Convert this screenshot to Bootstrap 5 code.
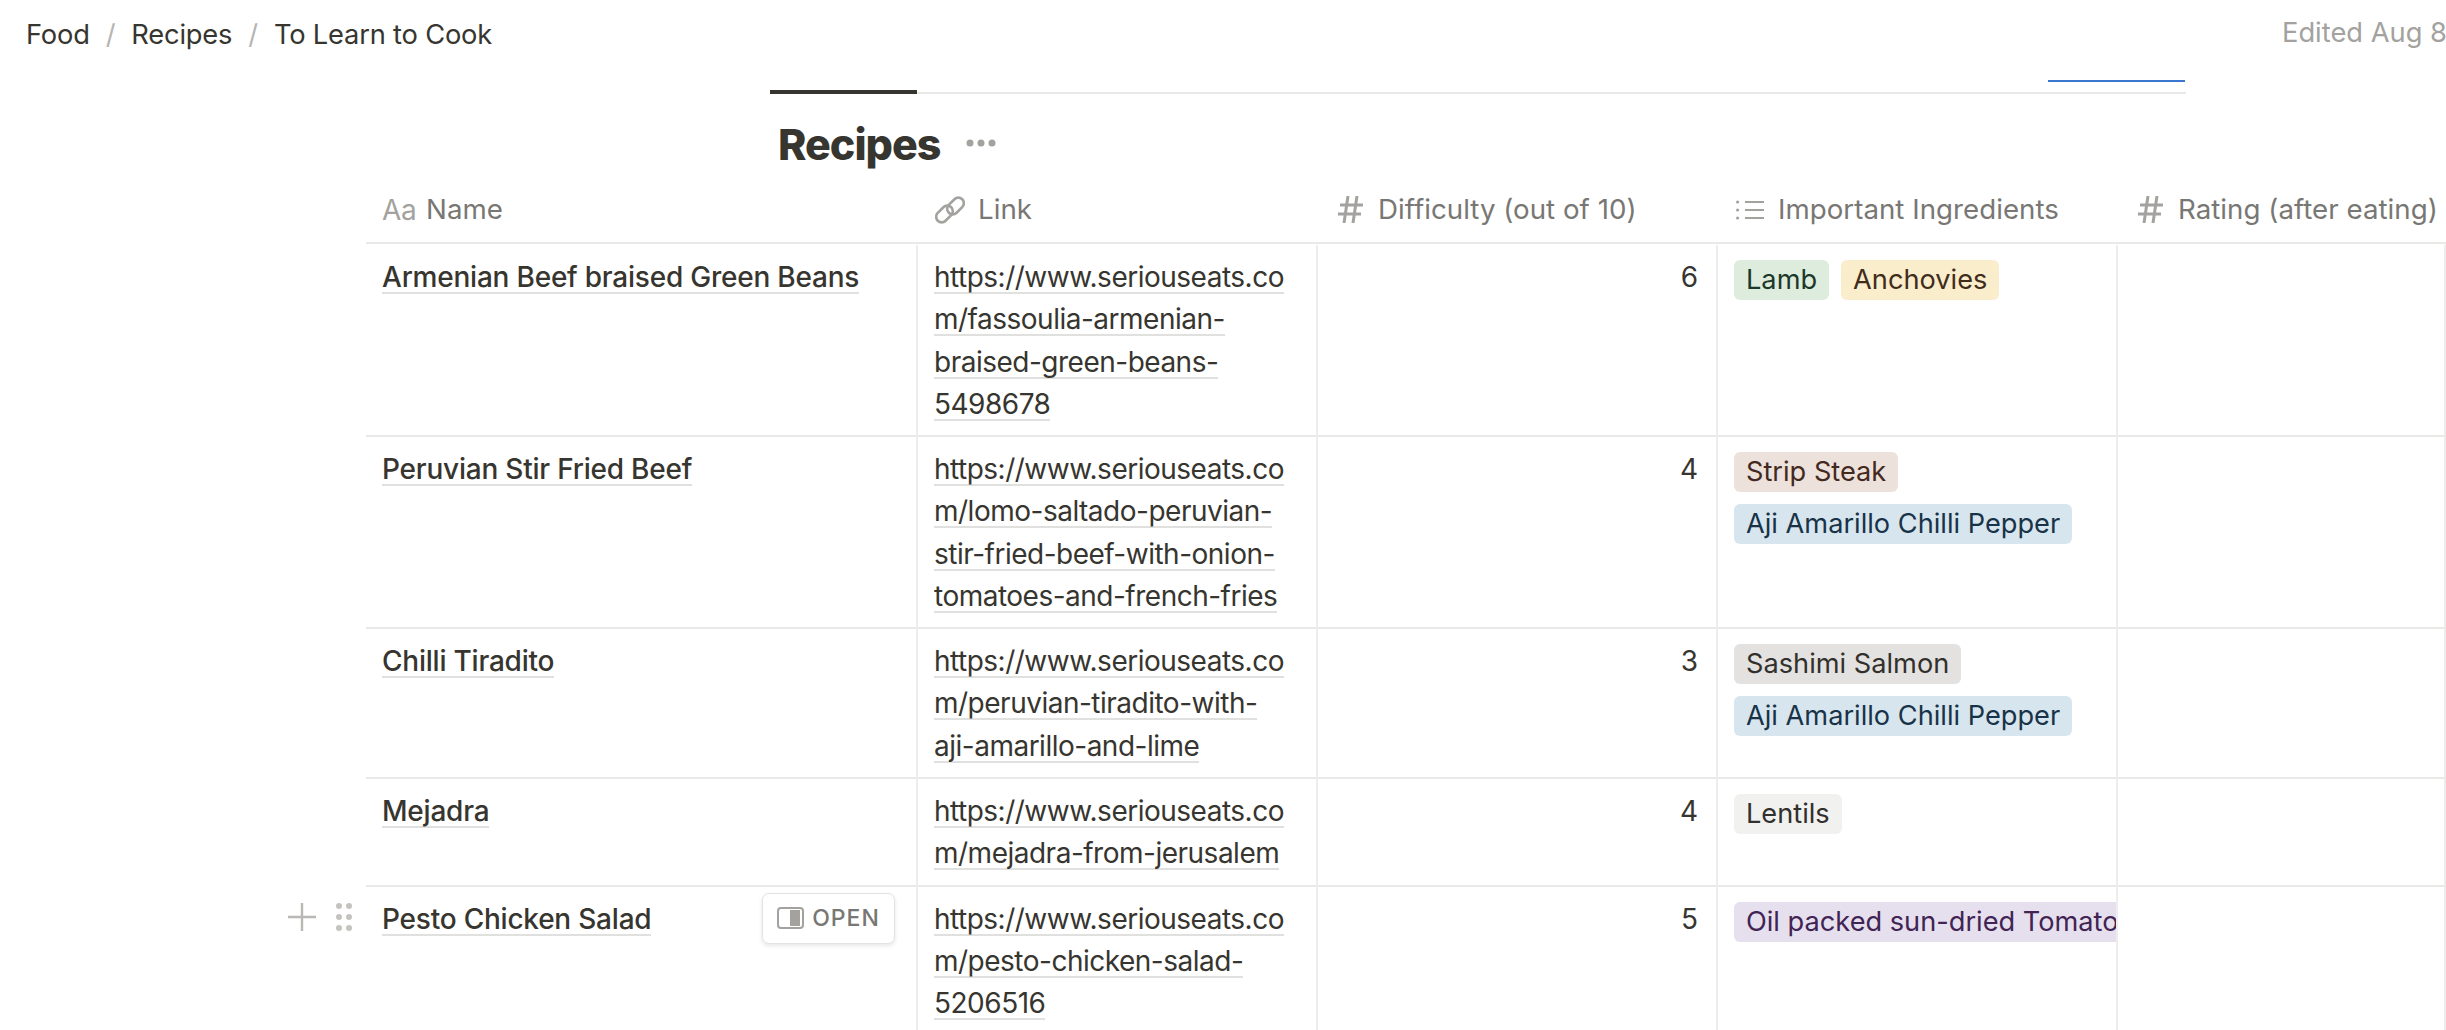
<!DOCTYPE html>
<html lang="en">
<head>
<meta charset="utf-8">
<title>To Learn to Cook</title>
<link href="https://cdn.jsdelivr.net/npm/bootstrap@5.3.0/dist/css/bootstrap.min.css" rel="stylesheet">
<style>
html,body{height:100%;overflow:hidden;background:#fff}
body{font-family:Inter,"Liberation Sans",sans-serif;color:#37352f;font-size:28px;width:2446px}
.topbar{height:70px;padding-left:26px;white-space:nowrap}
.crumb{font-size:27.3px;letter-spacing:-.2px}
.crumb-sep{color:#b5b4b1;margin:0 16px}
.edited{font-size:27.3px;color:#a3a29e;width:164px;overflow:hidden;flex:none;margin-top:-3px}
.tabrow{margin-left:770px;width:1416px;height:24px;border-bottom:2px solid #e9e9e8;position:relative}
.tab-active{position:absolute;left:0;bottom:-2px;width:147px;height:4px;background:#37352f}
.tab-blue{position:absolute;right:1px;bottom:10px;width:137px;height:2px;background:#3a78cf}
.title-row{margin-left:778px;height:91px;padding-top:15px}
.title-text{font-size:43px;font-weight:800;letter-spacing:-1px;margin:0;line-height:70px;color:#37352f}
.title-dots{margin:30px 0 0 25px;flex:none}
.nt-wrap{margin-left:366px;width:2080px;position:relative}
.nt-table{table-layout:fixed;border-collapse:separate;border-spacing:0;width:2080px;margin:0}
.nt-table th,.nt-table td{padding:0;font-weight:400;vertical-align:top;overflow:hidden}
.nt-table th{height:59px;padding:1px 0 9px;color:#787774;font-size:27.7px;letter-spacing:.02px;border-bottom:2px solid #e9e9e8;white-space:nowrap}
.nt-table td{border-bottom:2px solid #e9e9e8;border-right:2px solid #ededec;padding:11px 16px 10px;line-height:42.3px}
.nt-table tr:first-child td{border-top:2px solid #fff;padding-top:10px;padding-bottom:9.8px}
.c1{width:552px}.c2{width:400px}.c3{width:400px}.c4{width:400px}.c5{width:328px}
.hcell{height:47px;padding-left:14px}
.hicon{width:36px;margin-right:10px;flex:none}
.aa{color:#a3a29e;font-size:28px;letter-spacing:-.2px;padding-left:2px}
.ul{background:linear-gradient(#e0e0de,#e0e0de) 0 100%/100% 2px no-repeat}
.nm{font-weight:500;letter-spacing:-.22px}
.lk{letter-spacing:-.5px}
.num{text-align:right;padding-right:18px!important}
.nt-table td.tagcell{padding:15px 0 9px 16px}
.nt-table tr:first-child td.tagcell{padding-top:14px}
.nt-tag{height:40px;line-height:40px;border-radius:6px;padding:0 12px;font-size:27.2px;white-space:nowrap;display:inline-block}
.tagrow{gap:12px;overflow:hidden;width:382px}
.tg{background:#ddecdc;color:#1c3829}.ty{background:#faedcc;color:#402c1b}.tb{background:#ece1db;color:#44291f}
.tbl{background:#d7e5ee;color:#183347}.tgr{background:#e3e2e0;color:#32302c}.tl{background:#f1f1ef;color:#32302c}.tp{background:#e6dfee;color:#412454}
.rowctl{position:absolute;left:-78px;top:16px;gap:20px}
.openbtn{position:absolute;left:396px;top:6px;width:133px;height:51px;background:#fff;border:1px solid #e3e3e1;border-radius:7px;box-shadow:0 2px 4px rgba(15,15,15,.1);color:#787774;font-size:23px;font-weight:500;letter-spacing:1px}
.nt-table td.pos-cell{position:relative;overflow:visible}
</style>
</head>
<body>
<div class="topbar d-flex justify-content-between align-items-center">
  <div class="crumb"><span>Food</span><span class="crumb-sep">/</span><span>Recipes</span><span class="crumb-sep">/</span><span>To Learn to Cook</span></div>
  <div class="edited">Edited Aug 8</div>
</div>
<div class="tabrow"><div class="tab-active"></div><div class="tab-blue"></div></div>
<div class="title-row d-flex align-items-start">
  <h1 class="title-text">Recipes</h1>
  <svg class="title-dots" width="30" height="8" viewBox="0 0 30 8" fill="#a3a29e"><circle cx="4" cy="4" r="3.5"/><circle cx="15" cy="4" r="3.5"/><circle cx="26" cy="4" r="3.5"/></svg>
</div>
<div class="nt-wrap">
<table class="nt-table">
<colgroup><col class="c1"><col class="c2"><col class="c3"><col class="c4"><col class="c5"></colgroup>
<thead><tr>
<th><div class="hcell d-flex align-items-center"><span class="hicon aa">Aa</span>Name</div></th>
<th><div class="hcell d-flex align-items-center"><span class="hicon d-flex justify-content-center"><svg width="30" height="30" viewBox="0 0 30 30" fill="none" stroke="#a3a29e" stroke-width="2.6"><rect x="11" y="5.5" width="19" height="11" rx="5.5" transform="rotate(-45 20.5 11)"/><rect x="0" y="13.5" width="19" height="11" rx="5.5" transform="rotate(-45 9.5 19)"/></svg></span>Link</div></th>
<th><div class="hcell d-flex align-items-center"><span class="hicon d-flex justify-content-center"><svg width="25" height="27" viewBox="0 0 25 27" fill="none" stroke="#a3a29e" stroke-width="3"><path d="M10 0L6 27M19 0l-4 27M2 9h23M0 18h23"/></svg></span>Difficulty (out of 10)</div></th>
<th><div class="hcell d-flex align-items-center"><span class="hicon d-flex justify-content-center"><svg width="28" height="20" viewBox="0 0 28 20" fill="#a3a29e"><circle cx="1.6" cy="2" r="1.6"/><circle cx="1.6" cy="10" r="1.6"/><circle cx="1.6" cy="18" r="1.6"/><rect x="9" y="1" width="19" height="2"/><rect x="9" y="9" width="19" height="2"/><rect x="9" y="17" width="19" height="2"/></svg></span>Important Ingredients</div></th>
<th><div class="hcell d-flex align-items-center"><span class="hicon d-flex justify-content-center"><svg width="25" height="27" viewBox="0 0 25 27" fill="none" stroke="#a3a29e" stroke-width="3"><path d="M10 0L6 27M19 0l-4 27M2 9h23M0 18h23"/></svg></span>Rating (after eating)</div></th>
</tr></thead>
<tbody>
<tr><td><span class="ul nm">Armenian Beef braised Green Beans</span></td>
<td class="lk"><span class="ul">https://www.seriouseats.co</span><br><span class="ul">m/fassoulia-armenian-</span><br><span class="ul">braised-green-beans-</span><br><span class="ul">5498678</span></td>
<td class="num">6</td>
<td class="tagcell"><div class="d-flex flex-wrap tagrow"><span class="nt-tag tg">Lamb</span><span class="nt-tag ty">Anchovies</span></div></td><td></td></tr>
<tr><td><span class="ul nm">Peruvian Stir Fried Beef</span></td>
<td class="lk"><span class="ul">https://www.seriouseats.co</span><br><span class="ul">m/lomo-saltado-peruvian-</span><br><span class="ul">stir-fried-beef-with-onion-</span><br><span class="ul">tomatoes-and-french-fries</span></td>
<td class="num">4</td>
<td class="tagcell"><div class="d-flex flex-wrap tagrow"><span class="nt-tag tb">Strip Steak</span><span class="nt-tag tbl">Aji Amarillo Chilli Pepper</span></div></td><td></td></tr>
<tr><td><span class="ul nm">Chilli Tiradito</span></td>
<td class="lk"><span class="ul">https://www.seriouseats.co</span><br><span class="ul">m/peruvian-tiradito-with-</span><br><span class="ul">aji-amarillo-and-lime</span></td>
<td class="num">3</td>
<td class="tagcell"><div class="d-flex flex-wrap tagrow"><span class="nt-tag tgr">Sashimi Salmon</span><span class="nt-tag tbl">Aji Amarillo Chilli Pepper</span></div></td><td></td></tr>
<tr><td><span class="ul nm">Mejadra</span></td>
<td class="lk"><span class="ul">https://www.seriouseats.co</span><br><span class="ul">m/mejadra-from-jerusalem</span></td>
<td class="num">4</td>
<td class="tagcell"><div class="d-flex flex-wrap tagrow"><span class="nt-tag tl">Lentils</span></div></td><td></td></tr>
<tr><td class="pos-cell"><span class="ul nm">Pesto Chicken Salad</span>
<div class="rowctl d-flex align-items-center"><svg width="28" height="28" viewBox="0 0 28 28" stroke="#b9b8b5" stroke-width="2.4" fill="none"><path d="M14 0v28M0 14h28"/></svg><svg width="16" height="28" viewBox="0 0 16 28" fill="#c4c3c0"><circle cx="3" cy="3" r="3"/><circle cx="13" cy="3" r="3"/><circle cx="3" cy="14" r="3"/><circle cx="13" cy="14" r="3"/><circle cx="3" cy="25" r="3"/><circle cx="13" cy="25" r="3"/></svg></div>
<div class="openbtn d-flex align-items-center justify-content-center"><svg class="me-2" width="27" height="22" viewBox="0 0 27 22"><rect x="1" y="1" width="25" height="20" rx="3" fill="none" stroke="#a3a29e" stroke-width="2"/><rect x="13" y="3" width="10" height="16" fill="#a3a29e"/></svg>OPEN</div></td>
<td class="lk"><span class="ul">https://www.seriouseats.co</span><br><span class="ul">m/pesto-chicken-salad-</span><br><span class="ul">5206516</span></td>
<td class="num">5</td>
<td class="tagcell"><div class="d-flex flex-wrap tagrow"><span class="nt-tag tp">Oil packed sun-dried Tomatoes</span></div></td><td></td></tr>
</tbody>
</table>
</div>
<script src="https://cdn.jsdelivr.net/npm/bootstrap@5.3.0/dist/js/bootstrap.bundle.min.js"></script>
</body>
</html>
